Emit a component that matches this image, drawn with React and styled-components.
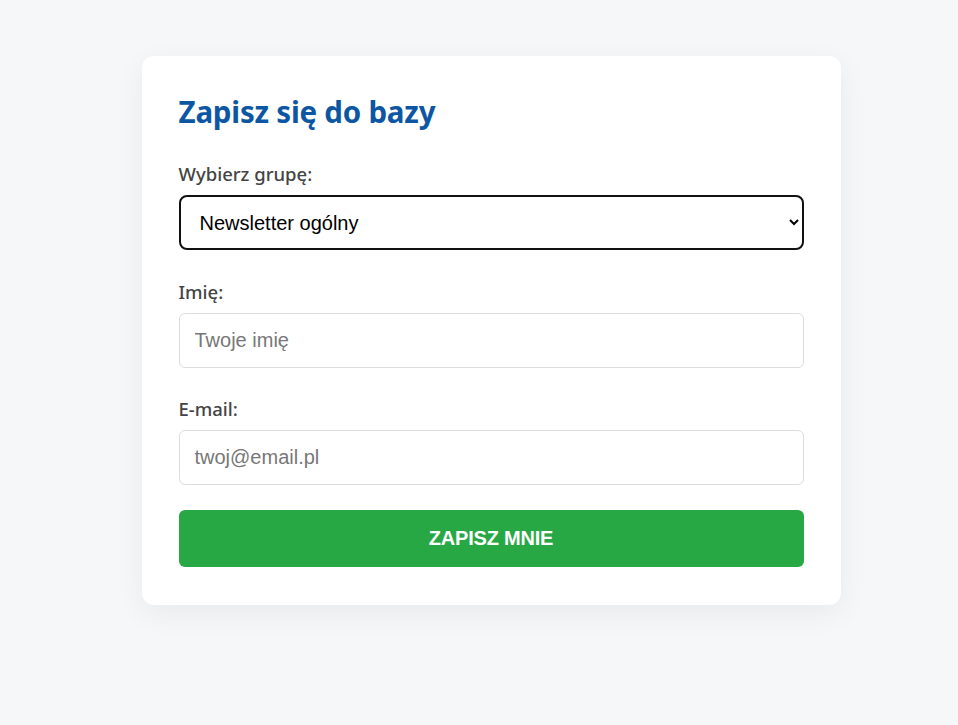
import styled, { createGlobalStyle } from 'styled-components';

const GlobalStyle = createGlobalStyle`
  html, body {
    margin: 0;
    padding: 0;
    background-color: #f6f7f9;
  }
`;

const Page = styled.div`
  display: flex;
  justify-content: center;
  align-items: flex-start;
  min-height: 725px;
  padding: 56px 0 0 24px;
  box-sizing: border-box;
`;

const Card = styled.form`
  width: 699px;
  box-sizing: border-box;
  padding: 37px 37px 38px;
  background-color: #ffffff;
  border-radius: 12px;
  box-shadow: 0 8px 30px rgba(0, 0, 0, 0.06);
  font-family: 'Noto Sans', Lato, sans-serif;
`;

const Title = styled.h2`
  margin: 2px 0 31px;
  font-size: 29.5px;
  line-height: 34px;
  font-weight: 700;
  color: #0c56a3;
  letter-spacing: -0.2px;
`;

const Group = styled.div`
  display: flex;
  flex-direction: column;
  margin-bottom: ${(props) => props.gap || '28px'};
`;

const Label = styled.label`
  display: block;
  margin-bottom: 8px;
  font-size: 18.5px;
  line-height: 27px;
  font-weight: 500;
  color: #444;
`;

const Select = styled.select`
  height: 55px;
  width: 100%;
  box-sizing: border-box;
  padding: 0 14px 0 15px;
  border: 2px solid #111;
  border-radius: 8px;
  background-color: #fff;
  font-family: 'Liberation Sans', Arial, sans-serif;
  font-size: 20px;
  color: #000;
`;

const Input = styled.input`
  height: 55px;
  width: 100%;
  box-sizing: border-box;
  padding: 0 15px;
  border: 1px solid #dcdcdc;
  border-radius: 6px;
  font-family: 'Liberation Sans', Arial, sans-serif;
  font-size: 20px;
  color: #222;
  outline: none;

  &::placeholder {
    color: #777;
  }
`;

const Submit = styled.button`
  display: block;
  width: 100%;
  height: 57px;
  border: none;
  border-radius: 6px;
  background-color: #28a745;
  color: #fff;
  font-family: 'Liberation Sans', Arial, sans-serif;
  font-size: 20px;
  font-weight: 700;
  text-transform: uppercase;
  letter-spacing: -0.2px;
  cursor: pointer;
`;

export default function App() {
  return (
    <>
      <GlobalStyle />
      <Page>
        <Card onSubmit={(e) => e.preventDefault()}>
          <Title>Zapisz się do bazy</Title>
          <Group>
            <Label htmlFor="group">Wybierz grupę:</Label>
            <Select id="group" defaultValue="general">
              <option value="general">Newsletter ogólny</option>
            </Select>
          </Group>
          <Group gap="27px">
            <Label htmlFor="name">Imię:</Label>
            <Input id="name" type="text" placeholder="Twoje imię" />
          </Group>
          <Group gap="25px">
            <Label htmlFor="email">E-mail:</Label>
            <Input id="email" type="email" placeholder="twoj@email.pl" />
          </Group>
          <Submit type="submit">Zapisz mnie</Submit>
        </Card>
      </Page>
    </>
  );
}
